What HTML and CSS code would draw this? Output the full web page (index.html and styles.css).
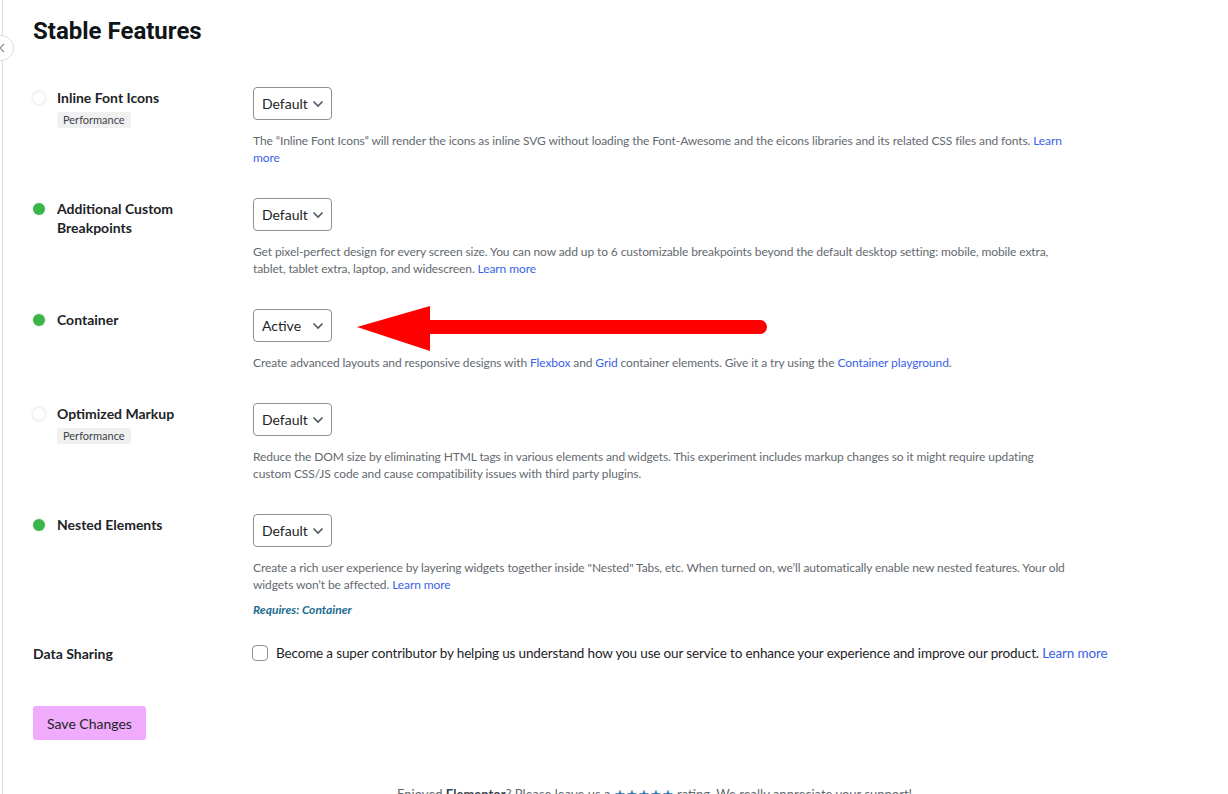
FILE: index.html
```html
<!DOCTYPE html>
<html lang="en">
<head>
<meta charset="utf-8">
<title>Stable Features</title>
<link rel="stylesheet" href="styles.css">
</head>
<body>
<div class="page">
  <div class="collapse"><svg width="10" height="12" viewBox="0 0 10 12"><path d="M6 2 L2 6 L6 10" fill="none" stroke="#8c8f94" stroke-width="1.2"/></svg></div>
  <main class="content">
    <h2 class="title">Stable Features</h2>

    <div class="row">
      <div class="label-col">
        <div class="label-line"><span class="dot off"></span><span class="label">Inline Font Icons</span></div>
        <span class="badge">Performance</span>
      </div>
      <div class="control-col">
        <div class="select"><span>Default</span><svg class="chev" width="12" height="8" viewBox="0 0 12 8"><path d="M1.5 1.5 L6 6 L10.5 1.5" fill="none" stroke="#50575e" stroke-width="1.6"/></svg></div>
        <p class="desc">The “Inline Font Icons” will render the icons as inline SVG without loading the Font-Awesome and the eicons libraries and its related CSS files and fonts. <a href="#">Learn more</a></p>
      </div>
    </div>

    <div class="row">
      <div class="label-col">
        <div class="label-line"><span class="dot on"></span><span class="label">Additional Custom Breakpoints</span></div>
      </div>
      <div class="control-col">
        <div class="select"><span>Default</span><svg class="chev" width="12" height="8" viewBox="0 0 12 8"><path d="M1.5 1.5 L6 6 L10.5 1.5" fill="none" stroke="#50575e" stroke-width="1.6"/></svg></div>
        <p class="desc">Get pixel-perfect design for every screen size. You can now add up to 6 customizable breakpoints beyond the default desktop setting: mobile, mobile extra, tablet, tablet extra, laptop, and widescreen. <a href="#">Learn more</a></p>
      </div>
    </div>

    <div class="row">
      <div class="label-col">
        <div class="label-line"><span class="dot on"></span><span class="label">Container</span></div>
      </div>
      <div class="control-col">
        <div class="select-wrap">
          <div class="select"><span>Active</span><svg class="chev" width="12" height="8" viewBox="0 0 12 8"><path d="M1.5 1.5 L6 6 L10.5 1.5" fill="none" stroke="#50575e" stroke-width="1.6"/></svg></div>
          <svg class="arrow" width="420" height="50" viewBox="0 0 420 50"><polygon points="4,21 77,0 77,45" fill="#ff0000"/><path d="M70 21 L407 21" stroke="#ff0000" stroke-width="14" stroke-linecap="round" fill="none"/></svg>
        </div>
        <p class="desc">Create advanced layouts and responsive designs with <a href="#">Flexbox</a> and <a href="#">Grid</a> container elements. Give it a try using the <a href="#">Container playground</a>.</p>
      </div>
    </div>

    <div class="row">
      <div class="label-col">
        <div class="label-line"><span class="dot off"></span><span class="label">Optimized Markup</span></div>
        <span class="badge">Performance</span>
      </div>
      <div class="control-col">
        <div class="select"><span>Default</span><svg class="chev" width="12" height="8" viewBox="0 0 12 8"><path d="M1.5 1.5 L6 6 L10.5 1.5" fill="none" stroke="#50575e" stroke-width="1.6"/></svg></div>
        <p class="desc">Reduce the DOM size by eliminating HTML tags in various elements and widgets. This experiment includes markup changes so it might require updating custom CSS/JS code and cause compatibility issues with third party plugins.</p>
      </div>
    </div>

    <div class="row">
      <div class="label-col">
        <div class="label-line"><span class="dot on"></span><span class="label">Nested Elements</span></div>
      </div>
      <div class="control-col">
        <div class="select"><span>Default</span><svg class="chev" width="12" height="8" viewBox="0 0 12 8"><path d="M1.5 1.5 L6 6 L10.5 1.5" fill="none" stroke="#50575e" stroke-width="1.6"/></svg></div>
        <p class="desc">Create a rich user experience by layering widgets together inside "Nested" Tabs, etc. When turned on, we’ll automatically enable new nested features. Your old widgets won’t be affected. <a href="#">Learn more</a></p>
        <p class="requires">Requires: Container</p>
      </div>
    </div>

    <div class="share-row">
      <div class="share-label">Data Sharing</div>
      <div class="share-control">
        <span class="checkbox"></span>
        <span class="share-text">Become a super contributor by helping us understand how you use our service to enhance your experience and improve our product. <a href="#">Learn more</a></span>
      </div>
    </div>

    <button class="save" type="button">Save Changes</button>

    <p class="footer">Enjoyed <strong>Elementor</strong>? Please leave us a <span class="stars">★★★★★</span> rating. We really appreciate your support!</p>
  </main>
</div>
</body>
</html>
```

FILE: styles.css
```css
* { box-sizing: border-box; }
html, body { margin: 0; padding: 0; background: #ffffff; }
body {
  font-family: "Lato", "Noto Sans", sans-serif;
  color: #1d2327;
  width: 1228px;
  height: 794px;
  overflow: hidden;
}
.page {
  position: relative;
  margin-left: 2px;
  border-left: 1px solid #dcdcde;
  min-height: 794px;
}
.collapse {
  position: absolute;
  left: -15px;
  top: 35px;
  width: 26px;
  height: 26px;
  border: 1px solid #dcdcde;
  border-radius: 50%;
  background: #fff;
  display: flex;
  align-items: center;
  justify-content: flex-end;
  padding-right: 5px;
}
.content {
  padding-left: 30px;
}
.title {
  margin: 0;
  padding-top: 17px;
  font-family: "Roboto", "Noto Sans", sans-serif;
  font-weight: 700;
  font-size: 24px;
  line-height: 28px;
  color: #101517;
}
.row {
  display: flex;
  padding: 16px 0 16px 0;
}
.title + .row { margin-top: 26px; }
.label-col {
  width: 220px;
  flex: none;
  display: flex;
  flex-direction: column;
  align-items: flex-start;
  padding-top: 1px;
}
.label-line {
  display: flex;
  align-items: flex-start;
}
.dot {
  flex: none;
  width: 12px;
  height: 12px;
  border-radius: 50%;
  margin: 4px 12px 0 0;
}
.dot.on { background: #39b54a; box-shadow: 0 0 2px 1px rgba(0,0,0,0.06); }
.dot.off { background: #fff; box-shadow: 0 0 3px 1px rgba(0,0,0,0.1); }
.label {
  font-size: 14px;
  font-weight: 700;
  line-height: 19px;
  color: #1d2327;
  width: 150px;
}
.badge {
  margin: 5px 0 0 24px;
  background: #f0f0f1;
  color: #3c434a;
  font-size: 11px;
  line-height: 16px;
  padding: 0 6px;
  border-radius: 2px;
}
.control-col {
  flex: none;
  width: 840px;
}
.select-wrap {
  position: relative;
}
.select {
  width: 79px;
  height: 33px;
  border: 1px solid #8c8f94;
  border-radius: 4px;
  display: flex;
  align-items: center;
  justify-content: space-between;
  padding: 0 7px 0 8px;
  font-size: 14px;
  color: #1d2327;
  background: #fff;
}
.chev { flex: none; }
.arrow {
  position: absolute;
  left: 100px;
  top: -3px;
}
.desc {
  margin: 12px 0 0 0;
  max-width: 815px;
  font-size: 12px;
  line-height: 17px;
  color: #646970;
  letter-spacing: -0.1px;
}
a { color: #3a62e8; text-decoration: none; }
.requires {
  margin: 8px 0 0 0;
  font-size: 12px;
  line-height: 17px;
  font-weight: 700;
  font-style: italic;
  color: #1c6b8f;
}
.share-row {
  display: flex;
  align-items: center;
  margin-top: 10px;
  height: 18px;
}
.share-label {
  width: 219px;
  flex: none;
  font-size: 14px;
  font-weight: 700;
  color: #1d2327;
}
.share-control {
  display: flex;
  align-items: center;
}
.checkbox {
  width: 16px;
  height: 16px;
  border: 1px solid #8c8f94;
  border-radius: 4px;
  margin-right: 8px;
  flex: none;
}
.share-text {
  font-size: 13.5px;
  letter-spacing: -0.15px;
  color: #1d2327;
  white-space: nowrap;
}
.save {
  display: block;
  margin-top: 44px;
  width: 113px;
  height: 34px;
  border: none;
  border-radius: 3px;
  background: #f0abfc;
  color: #1d2327;
  font-family: inherit;
  font-size: 14px;
  padding: 0;
}
.footer {
  margin: 45px 0 0 0;
  padding-left: 364px;
  font-size: 13px;
  line-height: 18px;
  color: #646970;
}
.footer strong { color: #3c434a; }
.stars { color: #2271b1; }
```
